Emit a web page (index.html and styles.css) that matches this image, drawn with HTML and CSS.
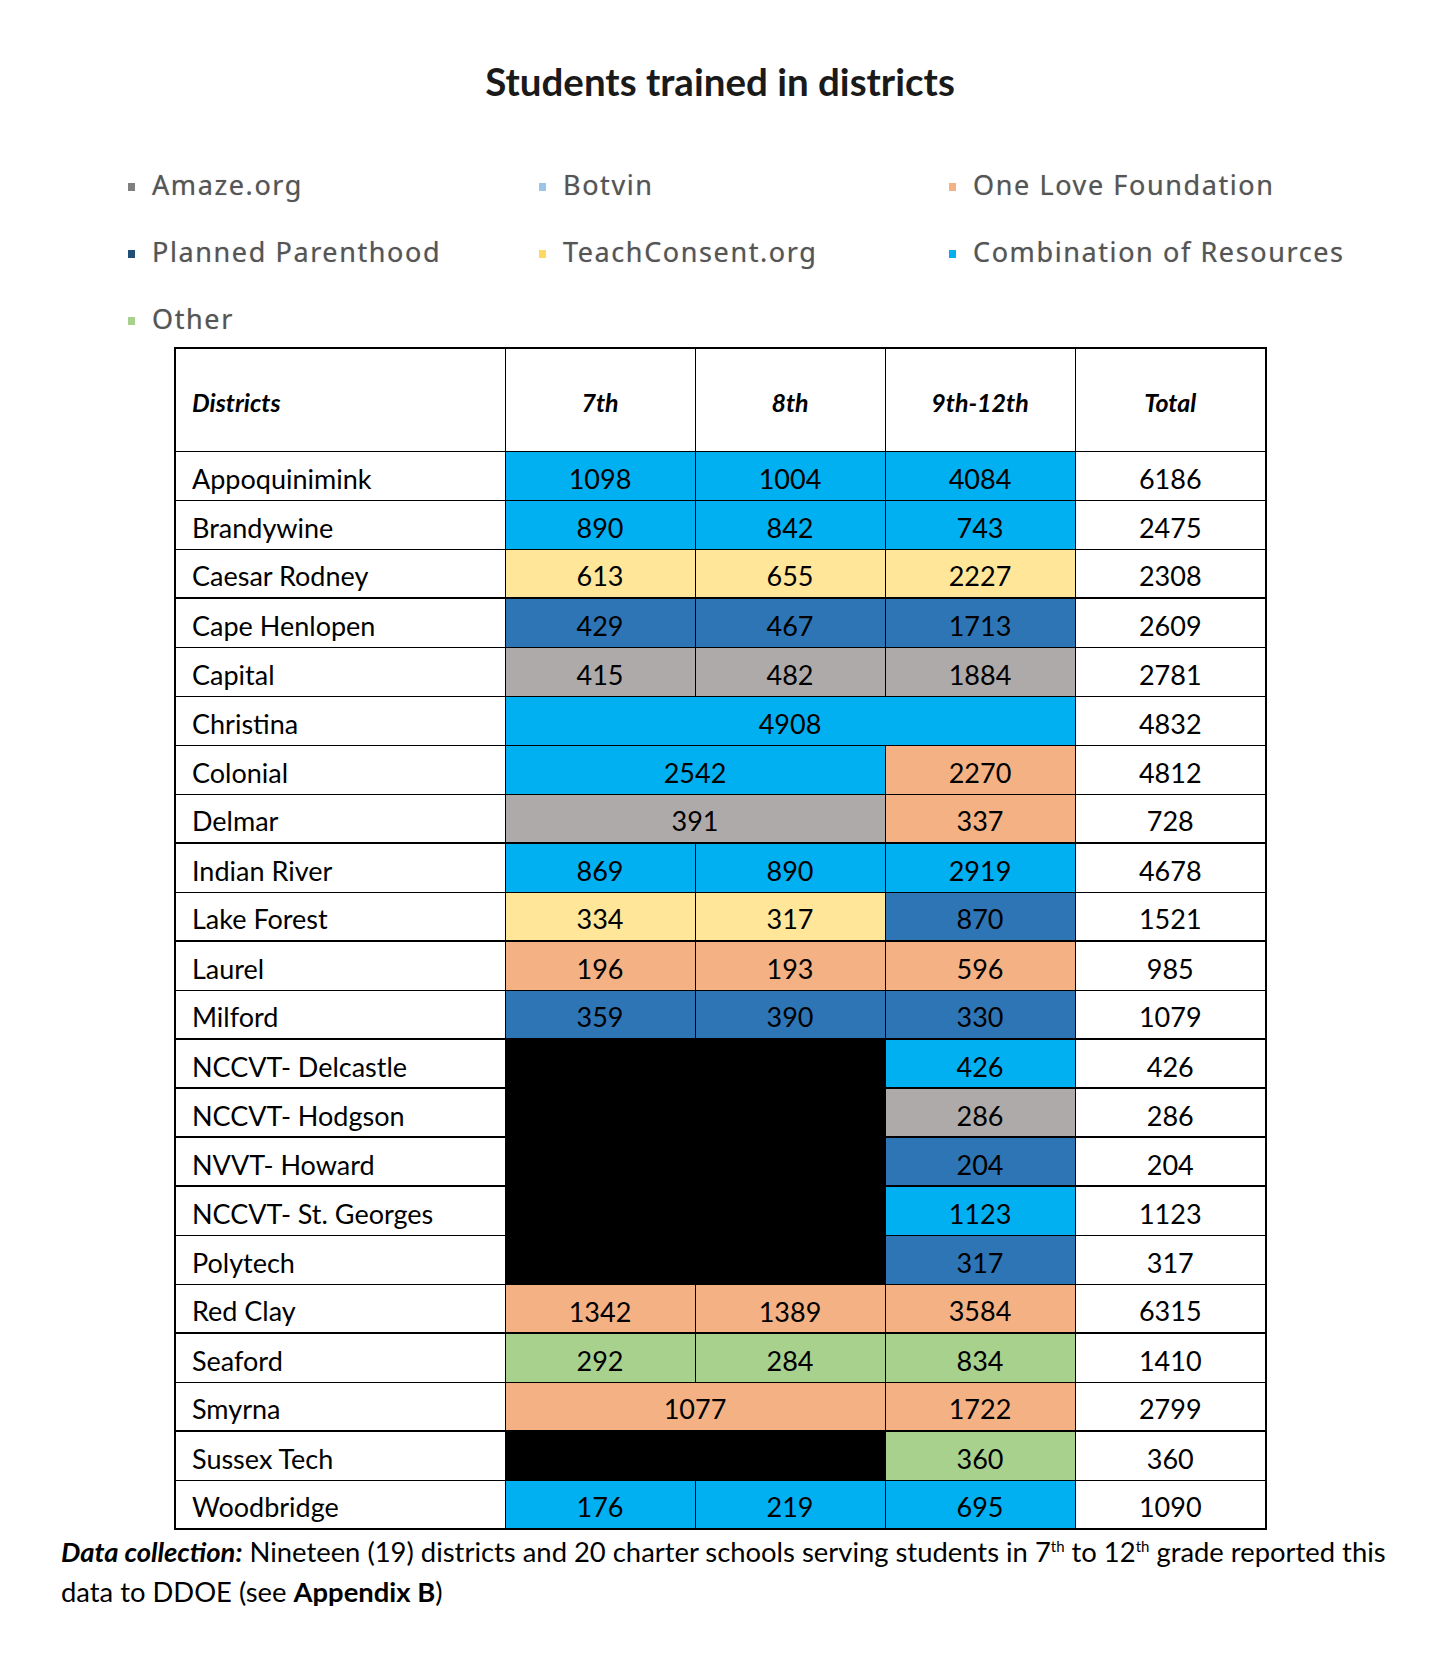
FILE: index.html
```html
<!DOCTYPE html>
<html>
<head>
<meta charset="utf-8">
<link rel="stylesheet" href="styles.css">
</head>
<body>
<div class="page">
  <h1 class="title">Students trained in districts</h1>

  <div class="legend">
    <div class="lg-item"><span class="mk mk-amaze"></span>Amaze.org</div>
    <div class="lg-item"><span class="mk mk-botvin"></span>Botvin</div>
    <div class="lg-item"><span class="mk mk-onelove"></span>One Love Foundation</div>
    <div class="lg-item"><span class="mk mk-pp"></span>Planned Parenthood</div>
    <div class="lg-item"><span class="mk mk-teach"></span>TeachConsent.org</div>
    <div class="lg-item"><span class="mk mk-combo"></span>Combination of Resources</div>
    <div class="lg-item"><span class="mk mk-other"></span>Other</div>
  </div>

  <table class="data">
    <colgroup>
      <col class="c-name"><col class="c-num"><col class="c-num"><col class="c-num"><col class="c-tot">
    </colgroup>
    <thead>
      <tr class="head">
        <th class="name">Districts</th><th>7th</th><th>8th</th><th>9th-12th</th><th>Total</th>
      </tr>
    </thead>
    <tbody>
      <tr><td class="name">Appoquinimink</td><td class="cy">1098</td><td class="cy">1004</td><td class="cy">4084</td><td>6186</td></tr>
      <tr><td class="name">Brandywine</td><td class="cy">890</td><td class="cy">842</td><td class="cy">743</td><td>2475</td></tr>
      <tr class="thick"><td class="name">Caesar Rodney</td><td class="ye">613</td><td class="ye">655</td><td class="ye">2227</td><td>2308</td></tr>
      <tr><td class="name">Cape Henlopen</td><td class="bl">429</td><td class="bl">467</td><td class="bl">1713</td><td>2609</td></tr>
      <tr><td class="name">Capital</td><td class="gr">415</td><td class="gr">482</td><td class="gr">1884</td><td>2781</td></tr>
      <tr><td class="name">Christina</td><td class="cy" colspan="3">4908</td><td>4832</td></tr>
      <tr><td class="name">Colonial</td><td class="cy" colspan="2">2542</td><td class="or">2270</td><td>4812</td></tr>
      <tr class="thick"><td class="name">Delmar</td><td class="gr" colspan="2">391</td><td class="or">337</td><td>728</td></tr>
      <tr><td class="name">Indian River</td><td class="cy">869</td><td class="cy">890</td><td class="cy">2919</td><td>4678</td></tr>
      <tr class="thick"><td class="name">Lake Forest</td><td class="ye">334</td><td class="ye">317</td><td class="bl">870</td><td>1521</td></tr>
      <tr><td class="name">Laurel</td><td class="or">196</td><td class="or">193</td><td class="or">596</td><td>985</td></tr>
      <tr class="thick"><td class="name">Milford</td><td class="bl">359</td><td class="bl">390</td><td class="bl">330</td><td>1079</td></tr>
      <tr class="thick"><td class="name">NCCVT- Delcastle</td><td class="bk" colspan="2" rowspan="5"></td><td class="cy">426</td><td>426</td></tr>
      <tr class="thick"><td class="name">NCCVT- Hodgson</td><td class="gr">286</td><td>286</td></tr>
      <tr class="thick"><td class="name">NVVT- Howard</td><td class="bl">204</td><td>204</td></tr>
      <tr><td class="name">NCCVT- St. Georges</td><td class="cy">1123</td><td>1123</td></tr>
      <tr><td class="name">Polytech</td><td class="bl">317</td><td>317</td></tr>
      <tr class="thick"><td class="name">Red Clay</td><td class="or">1342</td><td class="or">1389</td><td class="or">3584</td><td>6315</td></tr>
      <tr><td class="name">Seaford</td><td class="gn">292</td><td class="gn">284</td><td class="gn">834</td><td>1410</td></tr>
      <tr class="thick"><td class="name">Smyrna</td><td class="or" colspan="2">1077</td><td class="or">1722</td><td>2799</td></tr>
      <tr><td class="name">Sussex Tech</td><td class="bk" colspan="2"></td><td class="gn">360</td><td>360</td></tr>
      <tr><td class="name">Woodbridge</td><td class="cy">176</td><td class="cy">219</td><td class="cy">695</td><td>1090</td></tr>
    </tbody>
  </table>

  <p class="note"><b><i>Data collection:</i></b> Nineteen (19) districts and 20 charter schools serving students in 7<sup>th</sup> to 12<sup>th</sup> grade reported this data to DDOE (see <b>Appendix B</b>)</p>
</div>
</body>
</html>
```

FILE: styles.css
```css
html, body {
  margin: 0;
  padding: 0;
  background: #ffffff;
}

.page {
  width: 1440px;
  font-family: Lato, "Liberation Sans", sans-serif;
  color: #000;
}

.title {
  margin: 0;
  padding-top: 60px;
  height: 96px;
  box-sizing: border-box;
  text-align: center;
  font-size: 38.5px;
  font-weight: 700;
  line-height: 1.1;
  color: #1a1a1a;
}

.legend {
  display: grid;
  grid-template-columns: 411px 410px 1fr;
  grid-auto-rows: 67px;
  padding-left: 128px;
  padding-top: 68px;
  height: 251px;
  box-sizing: border-box;
  font-family: "Noto Sans", sans-serif;
  font-size: 27px;
  letter-spacing: 1.6px;
  color: #555555;
  text-shadow: 0 0 1px rgba(85, 85, 85, 0.5);
}

.lg-item {
  display: flex;
  align-items: center;
  height: 40px;
  white-space: nowrap;
}

.mk {
  display: inline-block;
  width: 7px;
  height: 8px;
  margin-right: 17px;
  margin-top: 5px;
  flex: none;
}

.mk-amaze { background: #7f7f7f; }
.mk-botvin { background: #9dc3e6; }
.mk-onelove { background: #f4b183; }
.mk-pp { background: #1f4e79; }
.mk-teach { background: #ffd966; }
.mk-combo { background: #00b0f0; }
.mk-other { background: #a9d18e; }

.data {
  margin-left: 174px;
  border-collapse: collapse;
  table-layout: fixed;
  width: 1093px;
  border: 2px solid #000;
  font-size: 27px;
}

.c-name { width: 330px; }
.c-num { width: 190px; }
.c-tot { width: 191px; }

.data tbody tr {
  height: 49px;
}

.data th,
.data td {
  border: 1px solid #000;
  text-align: center;
  padding: 5px 0 0 0;
  line-height: 1;
}

.data .head {
  height: 103px;
}

.data .head th {
  font-style: italic;
  font-weight: 700;
  font-size: 25px;
  padding-top: 6px;
}

.data .name {
  text-align: left;
  padding-left: 16px;
}

.data tr.thick td {
  border-bottom-width: 2px;
}

.cy { background: #00b0f0; }
.ye { background: #ffe699; }
.bl { background: #2e75b6; }
.gr { background: #aeaaaa; }
.or { background: #f4b183; }
.gn { background: #a9d18e; }
.bk { background: #000000; }

.note {
  margin: 0;
  padding: 2px 45px 0 61px;
  font-size: 27.4px;
  line-height: 40px;
}

.note sup {
  font-size: 15px;
  line-height: 0;
  vertical-align: 10px;
}
```
